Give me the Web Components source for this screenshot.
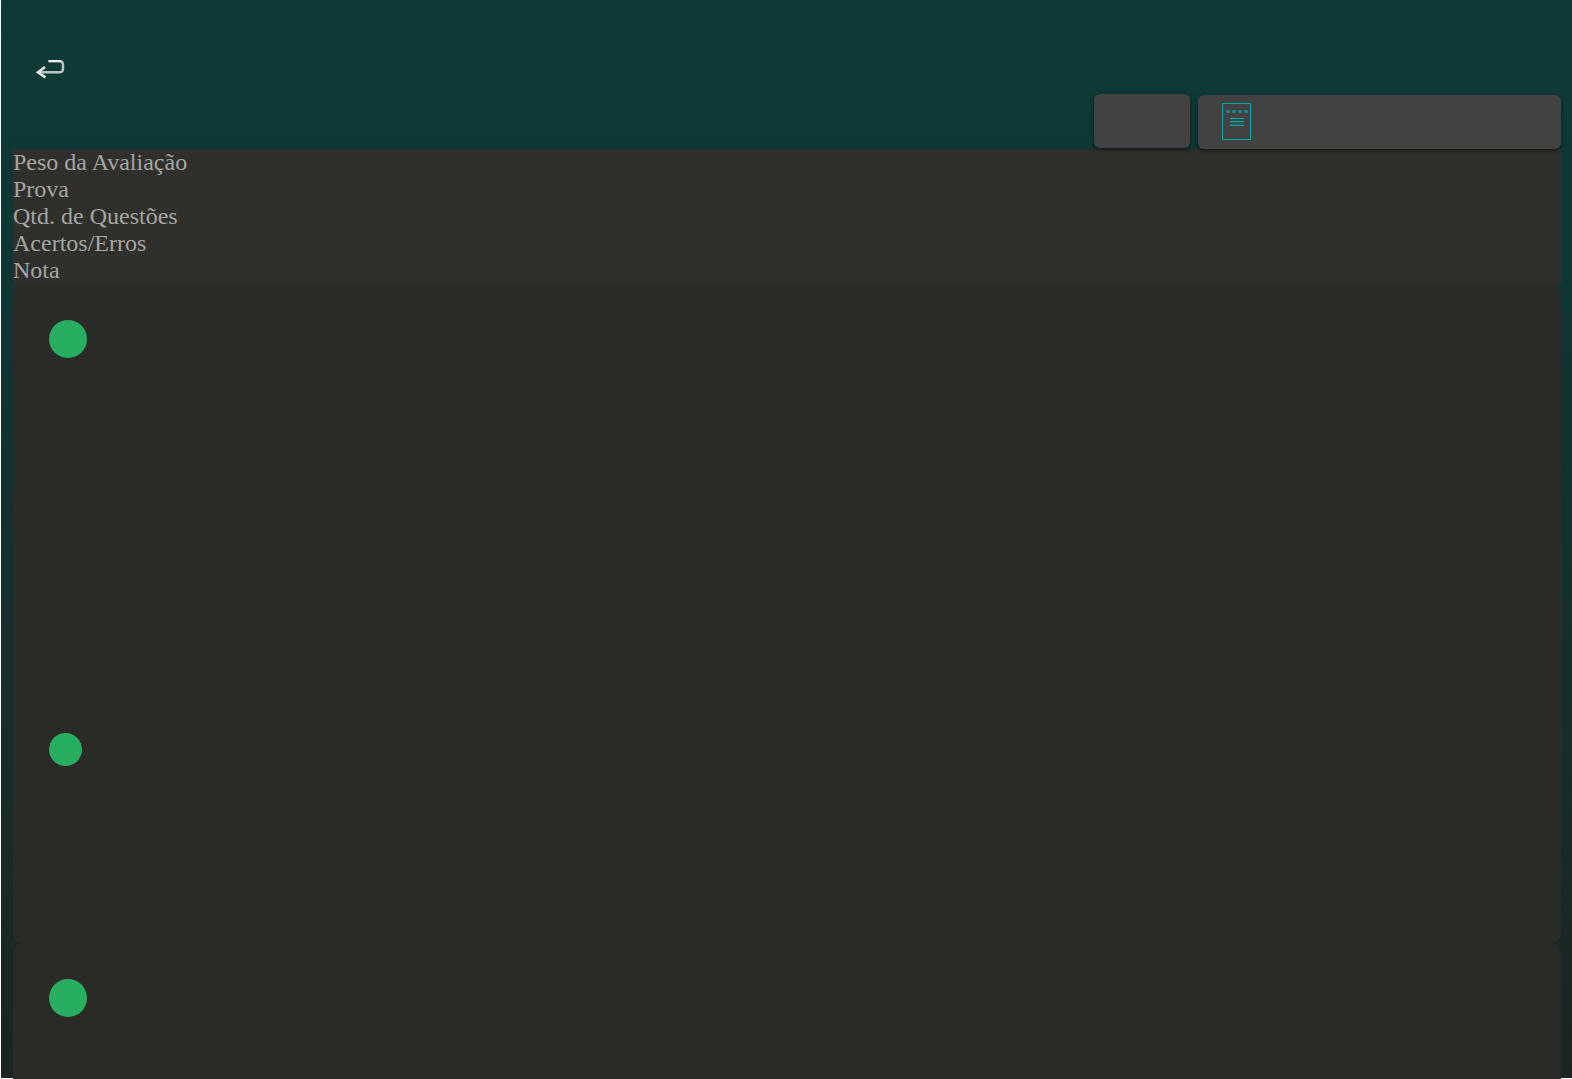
<!DOCTYPE html>
<html lang="pt-BR">
<head>
<meta charset="utf-8">
<title>Avaliação</title>
<style>
html, body { margin: 0; height: 100%; background: #fff; }
body { overflow: hidden; font-family: "Liberation Serif", "Times New Roman", serif; }
</style>
</head>
<body>
<exam-page>
  <back-link slot="nav"></back-link>
  <action-button slot="actions" label="Filtrar" size="small"></action-button>
  <action-button slot="actions" label="Gabarito" size="large"><notes-icon></notes-icon></action-button>
  <summary-list>
    <summary-item>Peso da Avaliação</summary-item>
    <summary-item>Prova</summary-item>
    <summary-item>Qtd. de Questões</summary-item>
    <summary-item>Acertos/Erros</summary-item>
    <summary-item>Nota</summary-item>
  </summary-list>
  <question-card>
    <status-dot size="large"></status-dot>
    <status-dot></status-dot>
  </question-card>
  <question-card>
    <status-dot size="large"></status-dot>
  </question-card>
</exam-page>
<script>
function define(name, html, setup) {
  const template = document.createElement('template');
  template.innerHTML = html;
  customElements.define(name, class extends HTMLElement {
    constructor() {
      super();
      this.attachShadow({ mode: 'open' }).append(template.content.cloneNode(true));
    }
    connectedCallback() { if (setup) setup(this); }
  });
}

define('back-link', `
<style>
:host { display: block; }
a { display: block; width: 30px; height: 22px; }
svg { display: block; }
</style>
<a href="#" aria-label="Voltar">
  <svg width="30" height="22" viewBox="0 0 30 22" fill="none">
    <path d="M12.500 4.200H23.500Q27 4.200 27 8V11.500Q27 15.300 23 15.300H3" stroke="#b9c7c4" stroke-width="2.400"/>
    <path d="M9 10L2 15.300L9.500 20.300" stroke="#dfe6e4" stroke-width="2.600"/>
    <path d="M12.500 3.800H25" stroke="#fff" stroke-width="1.400"/>
  </svg>
</a>`);

define('notes-icon', `
<style>:host, svg { display: block; }</style>
<svg width="30" height="38" viewBox="0 0 30 38" fill="none" stroke="#00a8a4" aria-hidden="true">
  <path d="M.5 .5H28.5V36.5H.5Z"/>
  <g fill="#287776">
    <rect x="4.500" y="7.500" width="3" height="2" rx="1"/>
    <rect x="10.500" y="7.500" width="3" height="2" rx="1"/>
    <rect x="16.500" y="7.500" width="3" height="2" rx="1"/>
    <rect x="22.500" y="7.500" width="3" height="2" rx="1"/>
  </g>
  <path d="M8 15.500H22M8 18.500H22M8 22.500H22"/>
  <path d="M8 19.500H22M8 21.500H22" opacity=".3"/>
</svg>`);

define('action-button', `
<style>
:host { display: block; width: 96px; }
:host([size="large"]) { width: 363px; margin-top: 1px; }
button { display: flex; align-items: center; width: 100%; height: 54px; margin: 0; padding: 0 24px; border: 0;
  border-radius: 6px; background: #424242; box-shadow: 0 2px 4px rgba(0,0,0,.5); }
</style>
<button type="button"><slot></slot></button>`, el => {
  el.shadowRoot.querySelector('button').setAttribute('aria-label', el.getAttribute('label'));
});

define('summary-item', `
<style>:host { display: block; font-size: 24px; line-height: 27px; color: #a5a5a2; }</style>
<slot></slot>`);

define('summary-list', `
<style>:host { display: block; background: #2f2f2b; }</style>
<slot></slot>`);

define('status-dot', `
<style>
:host { display: block; width: 33px; height: 33px; border-radius: 50%; background: #27ae60; }
:host([size="large"]) { width: 38px; height: 38px; }
</style>`);

define('question-card', `
<style>
:host { display: flex; flex-direction: column; justify-content: flex-start; gap: 375px;
  height: 659px; padding: 36px; box-sizing: border-box; border-radius: 9px; background: #2a2a26; }
</style>
<slot></slot>`);

define('exam-page', `
<style>
:host { display: block; box-sizing: border-box; height: calc(100vh - 1px); margin-left: 1px; padding: 0 11px 0 12px;
  background: linear-gradient(#0e3b38 0%, #0f3633 25%, #172d2b 70%, #1b2421 100%); }
header { padding: 57px 0 0 23px; }
.actions { display: flex; align-items: flex-start; justify-content: flex-end; gap: 8px; height: 55px; padding-top: 15px; position: relative; }
</style>
<header><slot name="nav"></slot></header>
<div class="actions"><slot name="actions"></slot></div>
<main><slot></slot></main>`);
</script>
</body>
</html>
